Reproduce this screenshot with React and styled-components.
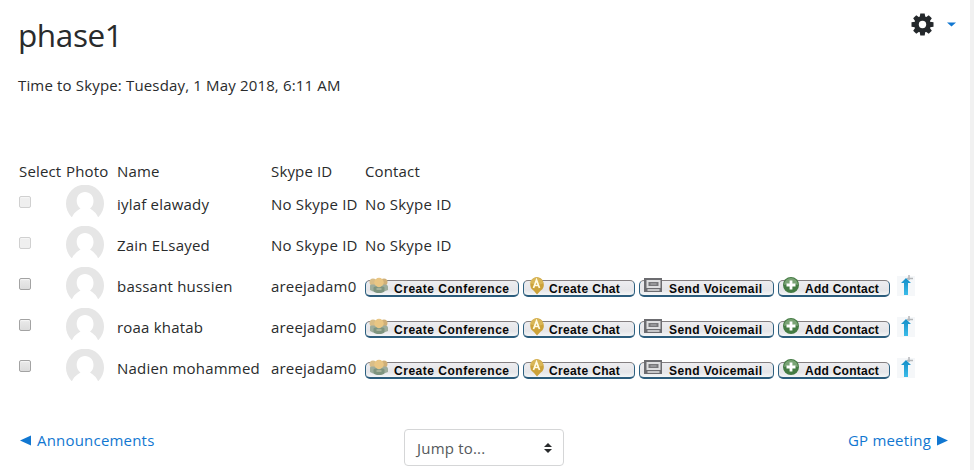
import React from "react";
import styled, { createGlobalStyle } from "styled-components";

const GlobalStyle = createGlobalStyle`
  * { box-sizing: border-box; }
  body { margin: 0; background: #fff; overflow: hidden; }
`;

const Page = styled.div`
  width: 974px;
  height: 470px;
  padding: 0 22px 0 18px;
  border-right: 4px solid #f1f1f1;
  display: flex;
  flex-direction: column;
  font: 400 15px/22px "Open Sans", sans-serif;
  color: #292b2c;
  white-space: nowrap;
`;

const Header = styled.header`
  display: flex;
  justify-content: space-between;
  align-items: flex-start;
  height: 74px;
`;

const Title = styled.h1`
  margin: 13px 0 0;
  font-size: 31.5px;
  line-height: 43px;
  font-weight: 400;
  letter-spacing: -0.4px;
`;

const SettingsButton = styled.button`
  display: flex;
  align-items: center;
  gap: 13px;
  margin: 13px -8px 0 0;
  padding: 0;
  border: 0;
  background: none;
`;

const Schedule = styled.p`
  margin: 0 0 64px;
  height: 22px;
  letter-spacing: 0.16px;
`;

const Table = styled.div`
  display: flex;
  flex-direction: column;
`;

const Row = styled.div`
  display: grid;
  grid-template-columns: 47px 51px 154px 94px 1fr;
  height: ${(p) => (p.$head ? "24px" : "41px")};
  padding-left: 1px;
  letter-spacing: ${(p) => (p.$head ? "0.15px" : "0.2px")};
`;

const Cell = styled.div`
  padding-top: ${(p) => p.$top || 0}px;
`;

const Checkbox = styled.input.attrs({ type: "checkbox" })`
  appearance: none;
  display: block;
  width: 12px;
  height: 12px;
  margin: 0;
  border: 1px solid #a3a3a3;
  border-radius: 2px;
  background: linear-gradient(#eaeaea, #dcdcdc);
  box-shadow: inset 0 1px 1px #f7f7f7;
  &:disabled {
    border-color: #d0d0d0;
    background: #efefef;
  }
`;

const Actions = styled.div`
  display: flex;
  gap: 4px;
  padding-top: 13px;
`;

const SkypeButton = styled.button`
  display: flex;
  align-items: center;
  width: ${(p) => p.$width}px;
  height: 17px;
  margin: 1px 0 0;
  padding: 0;
  border: 1px solid #2d6080;
  border-top-color: #847f81;
  border-bottom: 2px solid #2b5c7c;
  border-radius: 5px;
  background: linear-gradient(#ededf0, #e5e5e8 65%, #f4f6f7);
  color: #080808;
  font: 700 12px/14px "Liberation Sans", Arial, sans-serif;
`;

const ButtonIcon = styled.svg`
  flex: none;
  width: 22px;
  height: 20px;
  margin-top: -4px;
`;

const ButtonLabel = styled.span`
  margin-left: ${(p) => p.$offset}px;
  letter-spacing: ${(p) => p.$spacing}px;
  padding-top: 1px;
`;

const StatusIcon = styled.svg`
  width: 18px;
  height: 21px;
  margin: -4px 0 0 3px;
`;

const Footer = styled.footer`
  display: grid;
  grid-template-columns: 386px 160px 1fr;
  margin-top: 40px;
`;

const NavLink = styled.a`
  display: flex;
  align-items: center;
  justify-content: ${(p) => (p.$end ? "flex-end" : "flex-start")};
  gap: 5px;
  height: 22px;
  padding-left: 2px;
  color: #1177d1;
  text-decoration: none;
  letter-spacing: 0.2px;
`;

const JumpSelect = styled.button`
  display: flex;
  align-items: center;
  justify-content: space-between;
  height: 37px;
  padding: 0 11px 0 12px;
  border: 1px solid #d5d6d7;
  border-radius: 4px;
  background: #fff;
  color: #55595c;
  font: 400 15px/22px "Open Sans", sans-serif;
  letter-spacing: 0.2px;
`;

const Gear = () => (
  <svg width="23" height="23" viewBox="-11.5 -11.5 23 23" fill="#24282b">
    {[0, 45, 90, 135].map((a) => (
      <path key={a} d="M-2.2-11h4.4L3-6v12l-.8 5h-4.400l-.8-5V-6z" transform={`rotate(${a})`} />
    ))}
    <circle r="8.3" />
    <circle r="3.7" fill="#fff" />
  </svg>
);

const Avatar = () => (
  <svg width="38" height="33" viewBox="0 0 38 33" display="block">
    <path d="M5.500 32A19 19 0 1 1 32.500 32z" fill="#e6e6e6" />
    <path d="M5.500 33Q8 27 14.500 23.500A8.500 9 0 0 1 10.700 16C10.700 10.500 14 7 19 7s8.500 3.500 8.500 9A8.500 9 0 0 1 24 23.500Q30 27 32.500 33z" fill="#fff" />
  </svg>
);

const ConferenceIcon = () => (
  <ButtonIcon viewBox="0 0 22 20">
    <circle cx="7" cy="6" r="3.5" fill="#d8bd88" />
    <circle cx="18" cy="6" r="3.5" fill="#cfaf78" />
    <path d="M4 9.500q0-1 2-1h13q3 0 3 2.500v3l-4 1.500H7L4 14z" fill="#9dac9c" />
    <circle cx="13" cy="6.500" r="4.700" fill="#e9c684" />
    <path d="M7.500 11.500q1-1.500 3-1 2.500 2 5 0 2-.5 3 1V15q-1 2-5.500 2t-5.500-2z" fill="#7e947f" />
    <path d="M10.500 12h5v2h-5z" fill="#a5b19a" />
  </ButtonIcon>
);

const ChatIcon = () => (
  <ButtonIcon viewBox="0 0 22 20">
    <path d="M12.500 1a7.500 7.500 0 0 1 4 13.700L13 18.500l-3-3.600A7.500 7.500 0 0 1 12.500 1z" fill="#cca239" />
    <path d="M5.500 7q1.500-5 7-5.500 5.500.5 7 5.500-4 3-14 0z" fill="#e1c36a" opacity=".6" />
    <path d="M9.500 12l3-8 3 8m-5-2.500h4" fill="none" stroke="#fffbe5" strokeWidth="1.700" />
  </ButtonIcon>
);

const VoicemailIcon = () => (
  <ButtonIcon viewBox="0 0 22 20">
    <path d="M4 2h20v12l-1 2H4z" fill="#6c6c70" />
    <path d="M6.500 4h14v8h-14z" fill="#dedee0" />
    <path d="M8.500 6h10v4h-10z" fill="#77777a" />
    <path d="M10.500 8h6" stroke="#b8b8ba" />
    <path d="M7.500 13h12v2h-12z" fill="#c6c6c8" />
  </ButtonIcon>
);

const AddIcon = () => (
  <ButtonIcon viewBox="0 0 22 20">
    <circle cx="12" cy="9" r="8" fill="#447b43" />
    <path d="M5 9a7 7 0 0 1 14 0q-7-3-14 0" fill="#7aa375" />
    <path d="M12 4.500v9M7.500 9h9" stroke="#fff" strokeWidth="2.800" />
  </ButtonIcon>
);

const ArrowStatus = () => (
  <StatusIcon viewBox="0 0 18 21">
    <defs>
      <linearGradient id="arrow-fill" x1="0" x2="0" y1="0" y2="1">
        <stop stopColor="#148dc7" />
        <stop offset="1" stopColor="#3bbce9" />
      </linearGradient>
    </defs>
    <path d="M0 1h18v20H0z" fill="#f5f7f9" />
    <path d="M12 0v5M10 3.500h6" stroke="#b5b7ba" strokeWidth="1.500" />
    <path d="M9 3L14 8h-3v12H7V8H4z" fill="url(#arrow-fill)" />
  </StatusIcon>
);

const ACTIONS = [
  { label: "Create Conference", width: 154, Icon: ConferenceIcon, offset: 6, spacing: 0.52 },
  { label: "Create Chat", width: 112, Icon: ChatIcon, offset: 3, spacing: 0.35 },
  { label: "Send Voicemail", width: 135, Icon: VoicemailIcon, offset: 7, spacing: 0.4 },
  { label: "Add Contact", width: 112, Icon: AddIcon, offset: 4, spacing: 0.25 },
];

const PEOPLE = [
  { name: "iylaf elawady" },
  { name: "Zain ELsayed" },
  { name: "bassant hussien", skype: "areejadam0" },
  { name: "roaa khatab", skype: "areejadam0" },
  { name: "Nadien mohammed", skype: "areejadam0" },
];

export default function App() {
  return (
    <>
      <GlobalStyle />
      <Page>
        <Header>
          <Title>phase1</Title>
          <SettingsButton aria-label="Settings">
            <Gear />
            <svg width="9" height="5" viewBox="0 0 9 5"><path d="M0 .5h9L4.500 4.500z" fill="#1177d1" /></svg>
          </SettingsButton>
        </Header>
        <Schedule>Time to Skype: Tuesday, 1 May 2018, 6:11 AM</Schedule>
        <Table>
          <Row $head>
            {["Select", "Photo", "Name", "Skype ID", "Contact"].map((h) => <Cell key={h}>{h}</Cell>)}
          </Row>
          {PEOPLE.map(({ name, skype }) => (
            <Row key={name}>
              <Cell $top={12}><Checkbox disabled={!skype} aria-label={name} /></Cell>
              <Cell $top={1}><Avatar /></Cell>
              <Cell $top={9}>{name}</Cell>
              <Cell $top={9}>{skype || "No Skype ID"}</Cell>
              {skype ? (
                <Actions>
                  {ACTIONS.map(({ label, width, Icon, offset, spacing }) => (
                    <SkypeButton key={label} $width={width}>
                      <Icon />
                      <ButtonLabel $offset={offset} $spacing={spacing}>{label}</ButtonLabel>
                    </SkypeButton>
                  ))}
                  <ArrowStatus />
                </Actions>
              ) : <Cell $top={9}>No Skype ID</Cell>}
            </Row>
          ))}
        </Table>
        <Footer>
          <NavLink href="#announcements">
            <svg width="12" height="11" viewBox="0 0 12 11"><path d="M0 5.500L11 .5v10z" fill="#1177d1" /></svg>
            Announcements
          </NavLink>
          <JumpSelect>
            Jump to...
            <svg width="8" height="10" viewBox="0 0 8 10" fill="#292b2c"><path d="M0 4l4-4 4 4zM0 6h8L4 10z" /></svg>
          </JumpSelect>
          <NavLink $end href="#meeting">
            GP meeting
            <svg width="12" height="11" viewBox="0 0 12 11"><path d="M1 .5l11 5-11 5z" fill="#1177d1" /></svg>
          </NavLink>
        </Footer>
      </Page>
    </>
  );
}
